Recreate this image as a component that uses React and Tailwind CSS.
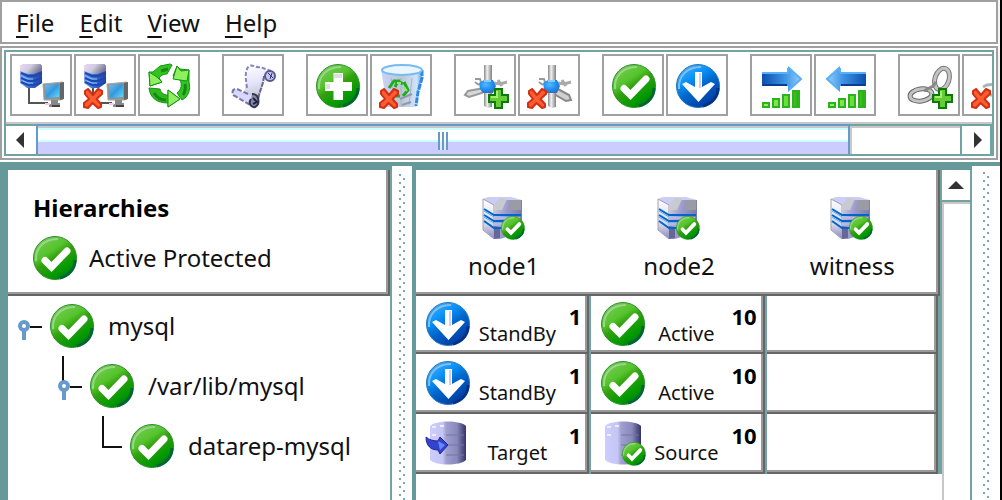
import React from 'react';

/* Shared gradients, referenced by id from every icon */
function IconDefs() {
    return (
        <svg className="absolute h-0 w-0" aria-hidden="true">
            <defs>
                <linearGradient id="green" x1="0.15" y1="0" x2="0.8" y2="1">
                    <stop offset="0" stopColor="#7ccb5c" />
                    <stop offset="0.35" stopColor="#55c42c" />
                    <stop offset="0.5" stopColor="#33a00f" />
                    <stop offset="0.8" stopColor="#009900" />
                    <stop offset="1" stopColor="#006633" />
                </linearGradient>
                <linearGradient id="blue" x1="0.15" y1="0" x2="0.8" y2="1">
                    <stop offset="0" stopColor="#55aaee" />
                    <stop offset="0.3" stopColor="#0a94fa" />
                    <stop offset="0.55" stopColor="#0066cc" />
                    <stop offset="1" stopColor="#003399" />
                </linearGradient>
                <linearGradient id="serverLeft" x1="0" y1="0" x2="0" y2="1">
                    <stop offset="0" stopColor="#ffffff" />
                    <stop offset="0.65" stopColor="#d4d4e4" />
                    <stop offset="1" stopColor="#8a88c4" />
                </linearGradient>
                <linearGradient id="serverRight" x1="0" y1="0" x2="1" y2="0.3">
                    <stop offset="0" stopColor="#d0d0d8" />
                    <stop offset="0.5" stopColor="#9999cc" />
                    <stop offset="1" stopColor="#7c7ca8" />
                </linearGradient>
                <linearGradient id="rack" x1="0" y1="0" x2="1" y2="0">
                    <stop offset="0" stopColor="#88aaee" />
                    <stop offset="0.5" stopColor="#3366cc" />
                    <stop offset="1" stopColor="#333f99" />
                </linearGradient>
                <linearGradient id="rackTop" x1="0" y1="0" x2="1" y2="0.4">
                    <stop offset="0" stopColor="#f4d4fa" />
                    <stop offset="0.5" stopColor="#ccccdd" />
                    <stop offset="1" stopColor="#777799" />
                </linearGradient>
                <linearGradient id="screen" x1="0" y1="0" x2="1" y2="1">
                    <stop offset="0" stopColor="#77bbee" />
                    <stop offset="0.5" stopColor="#3399dd" />
                    <stop offset="1" stopColor="#66ddff" />
                </linearGradient>
                <linearGradient id="arrowRight" x1="0" y1="0" x2="1" y2="0">
                    <stop offset="0" stopColor="#0d4fae" />
                    <stop offset="0.6" stopColor="#3f96e6" />
                    <stop offset="1" stopColor="#99d4ff" />
                </linearGradient>
                <linearGradient id="arrowLeft" x1="1" y1="0" x2="0" y2="0">
                    <stop offset="0" stopColor="#0d4fae" />
                    <stop offset="0.6" stopColor="#3f96e6" />
                    <stop offset="1" stopColor="#99d4ff" />
                </linearGradient>
                <linearGradient id="bars" x1="0" y1="0" x2="1" y2="0">
                    <stop offset="0" stopColor="#99ee66" />
                    <stop offset="0.7" stopColor="#66dd33" />
                    <stop offset="1" stopColor="#22aa11" />
                </linearGradient>
                <linearGradient id="bin" x1="0" y1="0" x2="1" y2="0">
                    <stop offset="0" stopColor="#c8d4fa" />
                    <stop offset="0.5" stopColor="#bcc6d4" />
                    <stop offset="0.85" stopColor="#d0e4fc" />
                    <stop offset="1" stopColor="#4499ee" />
                </linearGradient>
                <linearGradient id="disk" x1="0" y1="0" x2="1" y2="0">
                    <stop offset="0" stopColor="#ccccff" />
                    <stop offset="0.35" stopColor="#c6c6f4" />
                    <stop offset="0.45" stopColor="#9f9fd0" />
                    <stop offset="0.75" stopColor="#8888bb" />
                    <stop offset="0.85" stopColor="#666699" />
                    <stop offset="1" stopColor="#333366" />
                </linearGradient>
                <linearGradient id="metal" x1="0" y1="0" x2="1" y2="0">
                    <stop offset="0" stopColor="#888888" />
                    <stop offset="0.4" stopColor="#f2f2f2" />
                    <stop offset="1" stopColor="#808080" />
                </linearGradient>
                <linearGradient id="paper" x1="0" y1="0" x2="0.2" y2="1">
                    <stop offset="0" stopColor="#ffffff" />
                    <stop offset="0.5" stopColor="#e4e4fa" />
                    <stop offset="1" stopColor="#b8b8c0" />
                </linearGradient>
                <radialGradient id="hub" cx="0.4" cy="0.35" r="0.7">
                    <stop offset="0" stopColor="#55bbff" />
                    <stop offset="0.6" stopColor="#1a8cf4" />
                    <stop offset="1" stopColor="#4466aa" />
                </radialGradient>
            </defs>
        </svg>
    );
}

function Icon({ children }) {
    return (
        <svg width="44" height="44" viewBox="0 0 44 44" fill="none" className="shrink-0 overflow-visible" aria-hidden="true">
            {children}
        </svg>
    );
}

function Check() {
    return (
        <>
            <circle cx="22" cy="22" r="21.5" fill="url(#green)" stroke="#2f8f2f" />
            <path d="M3 25C2 12 11 3 25 3" stroke="#9ad68a" strokeWidth="2" />
            <path d="M27 42C36 40 42 33 42 24" stroke="#006633" strokeWidth="3" />
            <path d="M12 24.500L18.500 31L34 15" stroke="#fff" strokeWidth="7" strokeLinecap="round" />
        </>
    );
}

const CheckIcon = () => (
    <Icon>
        <Check />
    </Icon>
);

const StandByIcon = () => (
    <Icon>
        <circle cx="22" cy="22" r="21.500" fill="url(#blue)" stroke="#2a76b8" />
        <path d="M3 25C2 12 11 3 25 3" stroke="#7cc0f4" strokeWidth="2" />
        <path d="M27 42C36 40 42 33 42 24" stroke="#003388" strokeWidth="3" />
        <path d="M19 8H26V23L35 18L39 20L22.500 38L6 20L10 18L19 23Z" fill="#fff" />
        <path d="M24 9V24" stroke="#ccccff" strokeWidth="2" />
    </Icon>
);

const PlusCircleIcon = () => (
    <Icon>
        <circle cx="22" cy="22" r="21.500" fill="url(#green)" stroke="#2f8f2f" />
        <path d="M3 25C2 12 11 3 25 3" stroke="#9ad68a" strokeWidth="2" />
        <path d="M27 42C36 40 42 33 42 24" stroke="#006633" strokeWidth="3" />
        <path d="M17.500 9H27V18H36V27H27V36H17.500V27H9V18H17.500Z" fill="#fff" />
        <path d="M18 10H26V14H18ZM10 20H14V25H10Z" fill="#dde0dd" />
    </Icon>
);

/* Small overlays drawn in the lower corners */
const RedCross = () => (
    <path
        d="M1 27L4 25L9 31L14 25L18 27V30L12.500 35L17 40V43L14 44L8.500 39L4 44L0 43V39L5 35L1 30Z"
        fill="#fb5c30"
        stroke="#d42e14"
        strokeWidth="2"
        strokeLinejoin="round"
    />
);

const GreenPlus = () => (
    <>
        <path d="M31 25H38V31H44V38H38V44H31V38H25V31H31Z" fill="#66cc33" stroke="#0b7a0b" strokeWidth="2" />
        <path d="M33 27V33H27" stroke="#a4ec74" strokeWidth="2" />
    </>
);

const Badge = () => (
    <g transform="translate(19 20) scale(0.54)">
        <Check />
    </g>
);

const ServerAndScreen = () => (
    <>
        <path d="M9 24V39H28" stroke="#555" strokeWidth="2" />
        <path d="M0 2L4 0H20L22 2V19L15 24H7L0 19Z" fill="url(#rack)" />
        <path d="M0 2L4 0H20L22 2V7L14 10H8L0 7Z" fill="url(#rackTop)" />
        <path d="M1 9L8 12H14L22 9M1 14L8 17H14L22 14M1 18L8 21H14L22 18" stroke="#1849b4" strokeWidth="2" />
        <path d="M3 13L8 15H13M3 17L8 19H13" stroke="#8cc4fa" />
        <path d="M23 20L43 18V35L40 36H24Z" fill="#8d9290" stroke="#a4a8a6" />
        <path d="M40 19L44 18V35L40 36Z" fill="#666" />
        <path d="M25 21L39 20V33L26 34Z" fill="url(#screen)" />
        <path d="M31 36H38V39H40V43H29V40H31Z" fill="#888" />
        <path d="M32 42H40" stroke="#444" strokeWidth="2" />
        <path d="M25 40H30" stroke="#f0c8f0" strokeWidth="2" />
    </>
);

const ConnectIcon = () => (
    <Icon>
        <ServerAndScreen />
    </Icon>
);

const DisconnectIcon = () => (
    <Icon>
        <ServerAndScreen />
        <RedCross />
    </Icon>
);

const RefreshIcon = () => (
    <Icon>
        <g stroke="#139413" strokeWidth="1" strokeLinejoin="round">
            <path d="M22 0L12 2L5 8L1 8L2 22L14 18L11 14C13 11 16 10 19 10L24 1Z" fill="#33c422" />
            <path d="M1 8L2 22L14 18L9 13Z" fill="#8ef060" />
            <path d="M25 12L29 2L32 5L41 6L41 18C43 26 40 33 34 36L29 29C34 25 34 20 32 16Z" fill="#33c422" />
            <path d="M25 15L29 2L33 7L41 6L39 17Z" fill="#8ef060" />
            <path d="M1 24L12 25C13 29 16 31 20 31V26L32 35L20 43V39C9 39 2 34 1 24Z" fill="#33b81c" />
            <path d="M20 26L32 35L20 43Z" fill="#8ef060" />
        </g>
        <path d="M13 7L20 5M37 20C38 25 37 28 35 31M6 29C9 34 13 36 18 36" stroke="#148a14" strokeWidth="3" />
    </Icon>
);

const ScrollIcon = () => (
    <Icon>
        <path d="M15 3C19 0 22 3 26 2L39 7C35 9 33 11 33 15C32 22 28 28 27 35L23 41L11 31C13 25 15 19 14 11Z" fill="url(#paper)" />
        <path d="M15 24C14 16 12 7 17 2C21 0 23 4 28 3L39 7" stroke="#8484bc" strokeWidth="2" strokeDasharray="4 2" />
        <path d="M32 12C31 22 27 28 26 36" stroke="#686892" strokeWidth="2" strokeDasharray="5 1" />
        <circle cx="38" cy="12" r="5" fill="#c4c4f4" stroke="#58588c" strokeWidth="2" />
        <path d="M36 9L41 14M40 9L38 15" stroke="#333366" strokeWidth="1" />
        <path d="M3 25C0 25 -1 31 3 32L21 42C26 41 27 36 25 33L15 30Z" fill="#d8d8ff" />
        <path d="M16 30L5 25C0 24 -1 31 3 32L20 42" stroke="#7777a2" strokeWidth="2" strokeDasharray="5 2" />
        <path d="M20 30C28 30 28 41 23 43C19 44 16 39 19 35" fill="#8888ac" stroke="#33334f" strokeWidth="2" />
        <path d="M21 34L25 38L21 40" stroke="#22223a" strokeWidth="2" />
    </Icon>
);

const TrashIcon = () => (
    <Icon>
        <path d="M1 5L7 43H36L43 6Z" fill="url(#bin)" />
        <path d="M11 14L14 38M21 14V42M32 14L29 41" stroke="#a8b4c4" strokeWidth="1" />
        <path d="M42 6V14L38 28L36 42" stroke="#2f88e4" strokeWidth="3" strokeDasharray="6 1" />
        <ellipse cx="22" cy="6" rx="20" ry="5" fill="#eaf6ff" stroke="#77bbee" strokeWidth="2" />
        <path d="M9 24L14 17H18L15 23M18 17L23 20M24 18L28 26L23 32M16 32H20" stroke="#22aa22" strokeWidth="3" />
        <path d="M17 19H21M24 23L27 27" stroke="#88ee66" strokeWidth="2" />
        <path d="M20 35L32 30M22 41L31 38" stroke="#8f9aa8" strokeWidth="2" />
        <RedCross />
    </Icon>
);

const HubBase = () => (
    <>
        <path d="M20 1H28V43L24 44L20 42Z" fill="url(#metal)" />
        <path d="M11 15L16 15L17 18L21 20M11 18L15 21" stroke="#999" strokeWidth="2" />
        <path d="M30 19L36 20L43 18M34 16L38 22" stroke="#aaa" strokeWidth="3" />
        <path d="M15 19L20 16H29L32 22L29 29H19L16 25Z" fill="url(#hub)" />
        <path d="M20 17H27" stroke="#8cf" strokeWidth="2" />
    </>
);

const AddPathIcon = () => (
    <Icon>
        <path d="M20 24L4 27L1 31L5 33L18 29Z" fill="#d8d8d8" stroke="#999" strokeWidth="2" />
        <HubBase />
        <GreenPlus />
    </Icon>
);

const RemovePathIcon = () => (
    <Icon>
        <path d="M28 24L41 31L43 36L38 37L26 30Z" fill="#d0d0d0" stroke="#888" strokeWidth="2" />
        <HubBase />
        <RedCross />
    </Icon>
);

const ExtendIcon = () => (
    <Icon>
        <path d="M2 8H28V2L42 15L28 28V22H2Z" fill="url(#arrowRight)" />
        <path d="M28 4V9M2 9H28M30 25L41 15L29 4" stroke="#5ab0f8" strokeWidth="2" />
        <path d="M3 21H27" stroke="#0a3c92" strokeWidth="2" />
        <path d="M3 39H9V43H3ZM13 35H19V43H13ZM23 31H29V43H23ZM33 27H39V43H33Z" fill="url(#bars)" stroke="#2cb41c" strokeWidth="2" />
    </Icon>
);

const UnextendIcon = () => (
    <Icon>
        <path d="M42 8H16V2L2 15L16 28V22H42Z" fill="url(#arrowLeft)" />
        <path d="M16 4V9M42 9H16M14 25L3 15L15 4" stroke="#5ab0f8" strokeWidth="2" />
        <path d="M41 21H17" stroke="#0a3c92" strokeWidth="2" />
        <path d="M5 39H11V43H5ZM15 35H21V43H15ZM25 31H31V43H25ZM35 27H41V43H35Z" fill="url(#bars)" stroke="#2cb41c" strokeWidth="2" />
    </Icon>
);

const LinkIcon = () => (
    <Icon>
        <ellipse cx="34" cy="15" rx="7" ry="11" transform="rotate(18 34 15)" stroke="#777" strokeWidth="5" />
        <ellipse cx="34" cy="15" rx="7" ry="11" transform="rotate(18 34 15)" stroke="#c4c4c4" strokeWidth="3" />
        <ellipse cx="13" cy="31" rx="11" ry="6" transform="rotate(-8 13 31)" stroke="#666" strokeWidth="5" />
        <ellipse cx="13" cy="31" rx="11" ry="6" transform="rotate(-8 13 31)" stroke="#c4c4c4" strokeWidth="3" />
        <path d="M16 27L25 22L28 18" stroke="#888" strokeWidth="3" />
        <GreenPlus />
    </Icon>
);

const UnlinkIcon = () => (
    <Icon>
        <path d="M11 23L15 21L24 20M18 31H26" stroke="#aab4b4" strokeWidth="3" />
        <RedCross />
    </Icon>
);

const NodeIcon = () => (
    <Icon>
        <path d="M1 3L6 1H29L40 4L36 9L12 10Z" fill="#ccccf4" />
        <path d="M1 3L12 9V43L1 34Z" fill="url(#serverLeft)" stroke="#a0a0b4" />
        <path d="M12 9L22 4L40 4V36L18 43H12Z" fill="url(#serverRight)" />
        <path d="M18 2L12 9V14H20L25 3Z" fill="#c9c9d2" />
        <path d="M28 4H39V14H28Z" fill="#9b9ba6" />
        <path d="M12 30V43L18 42V31Z" fill="#666699" />
        <path d="M2 13L12 19H39M2 19L12 25H24M2 25L12 32H20" stroke="#0066cc" strokeWidth="2" />
        <path d="M2 15L12 21M2 21L12 27H20" stroke="#5caaf4" />
        <path d="M12 22H38M12 28H22" stroke="#b8b8e8" strokeWidth="2" />
        <Badge />
    </Icon>
);

const Disk = () => (
    <>
        <path d="M4 5C9 -1 35 -1 40 5V39C34 45 10 45 4 39Z" fill="url(#disk)" />
        <path d="M20 14H38M20 24H38M20 34H38" stroke="#77779f" strokeWidth="1" />
        <path d="M6 6H10M6 14H10M14 5H18" stroke="#ededff" strokeWidth="2" />
    </>
);

const TargetIcon = () => (
    <Icon>
        <Disk />
        <path d="M0 16C3 19 8 20 12 20L14 16L22 24L14 33L12 29C5 29 0 25 0 16Z" fill="#3344cc" stroke="#222299" />
        <path d="M12 20L19 24L14 29Z" fill="#6688ff" />
    </Icon>
);

const SourceIcon = () => (
    <Icon>
        <Disk />
        <g transform="translate(2 1)">
            <Badge />
        </g>
    </Icon>
);

const menus = ['File', 'Edit', 'View', 'Help'];

const toolGroups = [
    [
        { label: 'Connect', icon: ConnectIcon },
        { label: 'Disconnect', icon: DisconnectIcon },
        { label: 'Refresh', icon: RefreshIcon },
    ],
    [{ label: 'View logs', icon: ScrollIcon }],
    [
        { label: 'Create resource', icon: PlusCircleIcon },
        { label: 'Delete resource', icon: TrashIcon },
    ],
    [
        { label: 'Create comm path', icon: AddPathIcon },
        { label: 'Delete comm path', icon: RemovePathIcon },
    ],
    [
        { label: 'In service', icon: CheckIcon },
        { label: 'Out of service', icon: StandByIcon },
    ],
    [
        { label: 'Extend', icon: ExtendIcon },
        { label: 'Unextend', icon: UnextendIcon },
    ],
    [
        { label: 'Create dependency', icon: LinkIcon },
        { label: 'Delete dependency', icon: UnlinkIcon },
    ],
];

const nodes = ['node1', 'node2', 'witness'];

const rows = [
    [
        { icon: StandByIcon, label: 'StandBy', priority: 1 },
        { icon: CheckIcon, label: 'Active', priority: 10 },
        null,
    ],
    [
        { icon: StandByIcon, label: 'StandBy', priority: 1 },
        { icon: CheckIcon, label: 'Active', priority: 10 },
        null,
    ],
    [
        { icon: TargetIcon, label: 'Target', priority: 1 },
        { icon: SourceIcon, label: 'Source', priority: 10 },
        null,
    ],
];

function MenuBar() {
    return (
        <nav className="flex h-11 items-center gap-[25px] border-2 border-[#a0a0a0] px-3.5 pt-0.5">
            {menus.map((name) => (
                <button key={name} className="text-2xl">
                    <span className="underline decoration-2 underline-offset-4">{name[0]}</span>
                    {name.slice(1)}
                </button>
            ))}
        </nav>
    );
}

function Toolbar() {
    return (
        <div className="mt-0.5 border-2 border-[#a0a0a0] p-0.5">
            <div className="border-2 border-[#72a3a3]">
                <div className="flex gap-[22px] overflow-hidden border-b-2 border-[#c8c8c8] pt-0.5 pb-1.5 pl-1">
                    {toolGroups.map((group, i) => (
                        <div key={i} className="flex shrink-0 gap-0.5">
                            {group.map(({ label, icon: Glyph }) => (
                                <button
                                    key={label}
                                    aria-label={label}
                                    className="flex size-[62px] shrink-0 items-center justify-center border-2 border-[#a0a0a0] pt-0.5 pl-0.5"
                                >
                                    <Glyph />
                                </button>
                            ))}
                        </div>
                    ))}
                </div>

                {/* Horizontal scrollbar */}
                <div className="flex h-[30px] border-t-2 border-[#72a3a3]">
                    <button aria-label="Scroll left" className="flex w-[30px] items-center justify-center pr-0.5">
                        <svg width="8" height="16" viewBox="0 0 8 16">
                            <path d="M8 0V16L0 8Z" fill="#333" />
                        </svg>
                    </button>
                    <div className="flex flex-1 bg-white">
                        <div className="-mt-0.5 flex flex-[15] flex-col border-x-2 border-t-2 border-[#6699cc]">
                            <div className="h-0.5 bg-[#c8c8c8]"></div>
                            <div className="relative flex-1 border-t-2 border-[#ccffff]">
                                <div className="h-2.5 bg-white"></div>
                                <div className="h-0.5 bg-[#ccffff]"></div>
                                <div className="h-3 bg-[#ccccff]"></div>
                                <div className="absolute top-0.5 left-1/2 flex h-[18px] -translate-x-1/2 gap-0.5 bg-white/60">
                                    <span className="w-0.5 bg-[#6699cc]"></span>
                                    <span className="w-0.5 bg-[#6699cc]"></span>
                                    <span className="w-0.5 bg-[#6699cc]"></span>
                                </div>
                            </div>
                        </div>
                        <div className="flex-[2] border-t-2 border-l-2 border-[#c8c8c8]"></div>
                    </div>
                    <button aria-label="Scroll right" className="flex w-8 items-center justify-center border-x-2 border-[#72a3a3] pl-1">
                        <svg width="8" height="16" viewBox="0 0 8 16">
                            <path d="M0 0V16L8 8Z" fill="#333" />
                        </svg>
                    </button>
                </div>
            </div>
        </div>
    );
}

/* Dotted grip of a split pane */
function Grip() {
    return (
        <div className="flex gap-0.5">
            <span className="w-0.5 bg-[repeating-linear-gradient(#79abab_0_2px,#fff_2px_8px)]"></span>
            <span className="mt-1 w-0.5 bg-[repeating-linear-gradient(#79abab_0_2px,#fff_2px_8px)]"></span>
        </div>
    );
}

function Connector({ top, leaf }) {
    return (
        <svg width="32" height="60" viewBox="0 0 32 60" fill="none" className="shrink-0" aria-hidden="true">
            {leaf ? (
                <path d="M5 0V31H24" stroke="#111" strokeWidth="2" />
            ) : (
                <>
                    {!top && <path d="M5 0V25" stroke="#111" strokeWidth="2" />}
                    <path d="M12 31H24" stroke="#111" strokeWidth="2" />
                    <path d="M6 34V44" stroke="#6699cc" strokeWidth="4" />
                    <circle cx="6" cy="30" r="4" fill="#fff" stroke="#6699cc" strokeWidth="4" />
                </>
            )}
        </svg>
    );
}

function TreeItem({ name, top, leaf, children }) {
    return (
        <li>
            <div className="flex h-[60px] items-center">
                <Connector top={top} leaf={leaf} />
                <CheckIcon />
                <span className="ml-3.5 text-2xl">{name}</span>
            </div>
            {children && <ul className="pl-10">{children}</ul>}
        </li>
    );
}

function HierarchyPanel() {
    return (
        <section className="flex w-96 shrink-0 flex-col border-r-2 border-[#72a3a3] bg-white">
            <header className="h-[126px] border-r-2 border-b-2 border-[#666] pt-[22px] pl-[25px] shadow-[inset_-2px_-2px_0_#999]">
                <h1 className="text-2xl font-bold text-black">Hierarchies</h1>
                <div className="mt-3 flex items-center gap-3">
                    <CheckIcon />
                    <span className="text-2xl">Active Protected</span>
                </div>
            </header>
            <ul className="pl-2.5">
                <TreeItem name="mysql" top>
                    <TreeItem name="/var/lib/mysql">
                        <TreeItem name="datarep-mysql" leaf />
                    </TreeItem>
                </TreeItem>
            </ul>
        </section>
    );
}

function StatusCell({ cell }) {
    return (
        <td className="h-[60px] border-r-2 border-[#72a3a3] p-0 group-first:h-[58px] last:border-r-4">
            <div className="flex h-full items-center border-r-2 border-b-2 border-[#666] pr-1.5 pl-2.5 shadow-[inset_-2px_-2px_0_#999]">
                {cell && (
                    <>
                        <cell.icon />
                        <span className="mt-5 flex-1 pr-1 text-center text-xl leading-6">{cell.label}</span>
                        <span className="mb-4 text-[22px] leading-6 font-bold text-black">{cell.priority}</span>
                    </>
                )}
            </div>
        </td>
    );
}

function StatusTable() {
    return (
        <section className="min-w-0 flex-1 bg-white">
            <table className="w-full table-fixed border-separate border-spacing-0">
                <thead>
                    <tr>
                        {nodes.map((node) => (
                            <th
                                key={node}
                                className="group h-[126px] border-[#72a3a3] p-0 font-normal last:border-r-2"
                            >
                                <div className="flex h-full flex-col items-center border-b-2 border-[#666] pt-[26px] shadow-[inset_0_-2px_0_#999] group-last:border-r-2 group-last:shadow-[inset_-2px_-2px_0_#999]">
                                    <NodeIcon />
                                    <span className="mt-2.5 text-2xl">{node}</span>
                                </div>
                            </th>
                        ))}
                    </tr>
                </thead>
                <tbody>
                    {rows.map((row, i) => (
                        <tr key={i} className="group">
                            {row.map((cell, j) => (
                                <StatusCell key={j} cell={cell} />
                            ))}
                        </tr>
                    ))}
                </tbody>
            </table>
        </section>
    );
}

export default function App() {
    return (
        <div className="flex min-h-screen flex-col border-r-2 border-black bg-white font-['Noto_Sans',sans-serif] text-[#111]">
            <IconDefs />
            <div className="bg-[#f4f4f4] pr-0.5">
                <div className="bg-white">
                    <MenuBar />
                    <Toolbar />
                </div>
            </div>

            <main className="mt-0.5 flex flex-1 border-t-8 border-l-8 border-[#669999]">
                <HierarchyPanel />
                <div className="-mt-1 flex w-5 justify-center bg-white pt-2">
                    <Grip />
                </div>
                <div className="w-1 bg-[#669999]"></div>
                <StatusTable />

                {/* Vertical scrollbar */}
                <div className="flex w-[30px] shrink-0 flex-col border-r-2 border-[#72a3a3]">
                    <button aria-label="Scroll up" className="flex h-8 items-center justify-center border-b-2 border-[#72a3a3]">
                        <svg width="16" height="8" viewBox="0 0 16 8">
                            <path d="M0 8H16L8 0Z" fill="#333" />
                        </svg>
                    </button>
                    <div className="flex-1 border-t-2 border-l-2 border-[#c8c8c8]"></div>
                </div>
                <div className="-mt-1 flex w-7 justify-center bg-white pt-1.5">
                    <Grip />
                </div>
            </main>
        </div>
    );
}
